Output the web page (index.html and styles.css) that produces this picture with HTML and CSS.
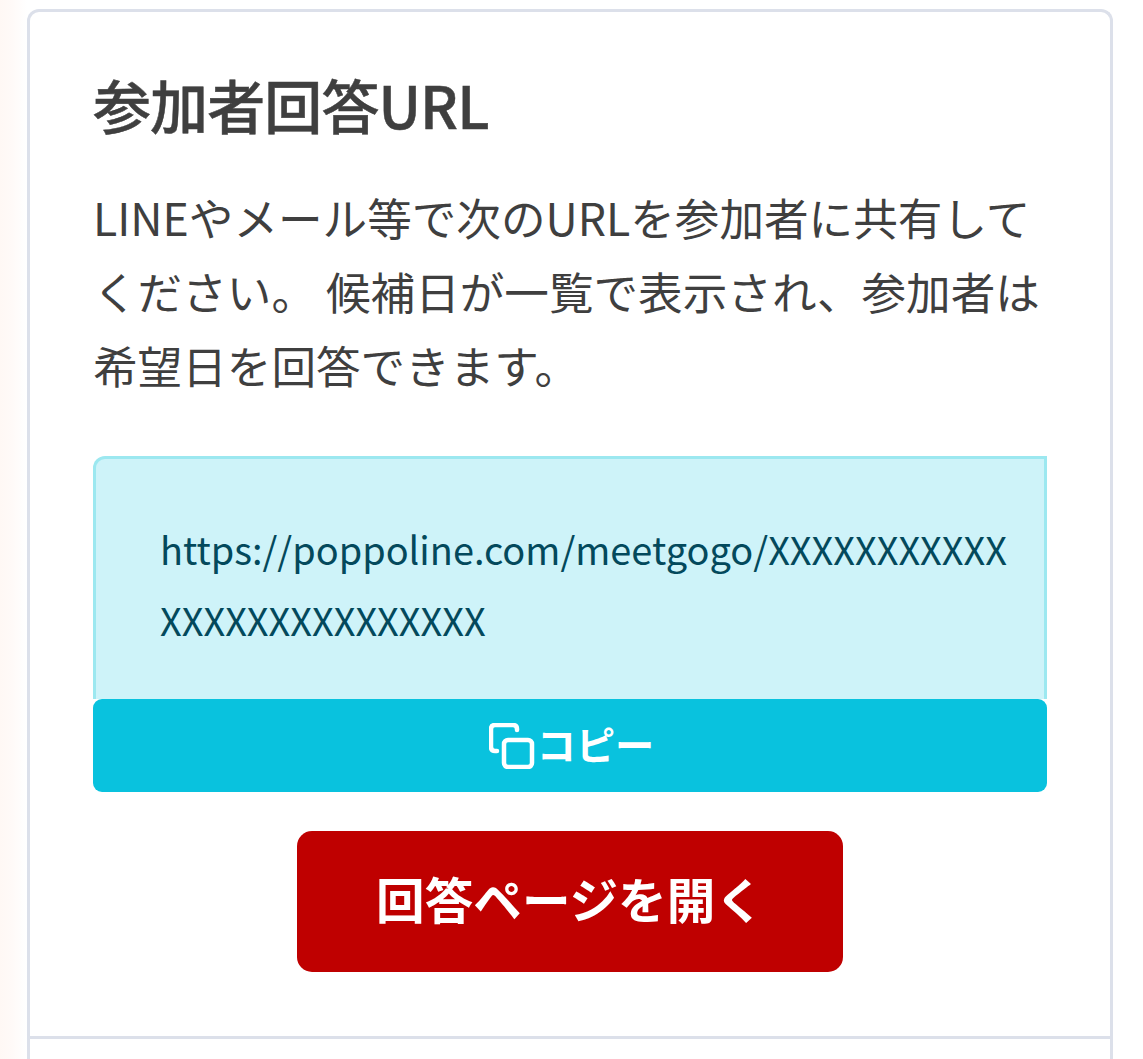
FILE: index.html
```html
<!DOCTYPE html>
<html lang="ja">
<head>
    <meta charset="UTF-8">
    <meta name="viewport" content="width=device-width, initial-scale=1.0">
    <title>参加者回答URL</title>
    <link rel="stylesheet" href="styles.css">
</head>
<body>
    <div class="card">
        <div class="card-body">
            <h2 class="title">参加者回答URL</h2>
            <p class="lead">LINEやメール等で次のURLを参加者に共有してください。 候補日が一覧で表示され、参加者は希望日を回答できます。</p>
            <div class="url-box">
                <div class="url-text">https://poppoline.com/meetgogo/XXXXXXXXXXXXXXXXXXXXXXXXXX</div>
                <button class="copy-button">
                    <svg class="copy-icon" viewBox="0 0 46 46" fill="none" stroke="#fff" stroke-width="4.5" stroke-linecap="round">
                        <rect x="15" y="17" width="28" height="27" rx="4"/>
                        <path d="M8 28 H6 Q2 28 2 24 V6 Q2 2 6 2 H24 Q28 2 28 6 V7"/>
                    </svg>
                    <span class="copy-label">コピー</span>
                </button>
            </div>
            <div class="open-row">
                <button class="open-button">回答ページを開く</button>
            </div>
        </div>
        <div class="card-footer"></div>
    </div>
</body>
</html>
```

FILE: styles.css
```css
html, body { height: 100%; }
body { margin: 0; padding: 9px 30px 0 27px; height: 1059px; box-sizing: border-box; overflow: hidden; font-family: "Noto Sans CJK JP", "Noto Sans", sans-serif; color: #3f3f3f; background: linear-gradient(to right, #fff8f5 0, #fffaf8 12px, #fff 27px); }
.card { background: #fff; border: 3px solid #dce0ea; border-bottom: none; border-radius: 12px 12px 0 0; height: 1080px; box-sizing: border-box; }
.card-body { padding: 50px 63px 64px; box-sizing: border-box; }
.card-footer { border-top: 3px solid #dce0ea; }
.title { margin: 0; font-size: 58px; line-height: 84px; font-weight: 500; letter-spacing: -0.9px; -webkit-text-stroke: 0.5px #3f3f3f; }
.lead { margin: 34px 0 0; font-size: 44.6px; line-height: 74px; }
.url-box { margin-top: 54px; }
.url-text { padding: 54px 30px 38px 64px; background: #cef3f9; border: 3px solid #9ce8f0; border-bottom: none; border-radius: 12px 0 0 0; color: #03495c; font-size: 37.9px; line-height: 71px; word-break: break-all; box-sizing: border-box; height: 243px; }
.copy-button { display: flex; align-items: center; justify-content: center; gap: 2px; width: 100%; height: 93px; padding: 0 0 0 3px; border: none; border-radius: 9px; background: #09c2de; color: #fff; font-family: inherit; font-size: 39.2px; font-weight: 700; }
.copy-label { margin-bottom: 6px; }
.copy-icon { width: 46px; height: 46px; }
.open-row { display: flex; justify-content: center; margin-top: 39px; }
.open-button { width: 546px; height: 141px; padding: 0 0 8px; border: none; border-radius: 15px; background: #bf0000; color: #fff; font-family: inherit; font-size: 48.6px; font-weight: 700; }
```
